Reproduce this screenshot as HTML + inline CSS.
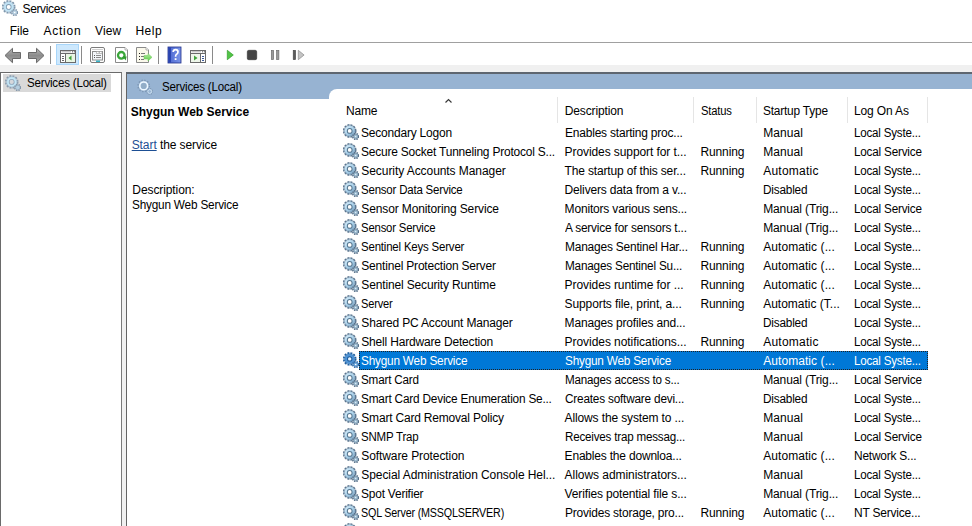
<!DOCTYPE html><html><head><meta charset="utf-8"><style>
*{margin:0;padding:0;box-sizing:border-box}
html,body{width:972px;height:526px;overflow:hidden;background:#fff}
body{position:relative;font-family:"Liberation Sans",sans-serif;font-size:12px;color:#000}
.t{position:absolute;white-space:nowrap;line-height:15px;height:15px;letter-spacing:-0.15px}
.b{letter-spacing:0}
.a{position:absolute}
.b{font-weight:bold}
.w{color:#fff}
svg.i{position:absolute;width:16px;height:16px}
</style></head><body>
<svg width="0" height="0" style="position:absolute"><defs><linearGradient id="gb" x1="0" y1="0" x2="1" y2="1"><stop offset="0" stop-color="#e0f4ff"/><stop offset="0.55" stop-color="#a8d0ea"/><stop offset="1" stop-color="#6f94b4"/></linearGradient>
<symbol id="gear" viewBox="0 0 16 16">
<circle cx="6.7" cy="6.9" r="6" fill="none" stroke="#5a748e" stroke-width="1.6" stroke-dasharray="2.2 0.94"/>
<circle cx="6.7" cy="6.9" r="5.3" fill="url(#gb)" stroke="#7090aa" stroke-width="0.5"/>
<circle cx="6.7" cy="6.9" r="2.9" fill="#56768f"/>
<circle cx="6.7" cy="6.9" r="1.9" fill="#fff"/>
<circle cx="12.7" cy="12.5" r="2.9" fill="none" stroke="#526c86" stroke-width="1.5" stroke-dasharray="1.4 0.96"/>
<circle cx="12.7" cy="12.5" r="2.3" fill="#98b8ce" stroke="#5e7890" stroke-width="0.5"/>
<circle cx="12.7" cy="12.5" r="0.7" fill="#e4f2fa"/>
</symbol>
<symbol id="gears" viewBox="0 0 16 16">
<circle cx="6.7" cy="6.9" r="5.9" fill="none" stroke="#1f5e9e" stroke-width="1.8" stroke-dasharray="2 1.09"/>
<circle cx="6.7" cy="6.9" r="5.1" fill="#4f94d6" stroke="#2a6aaa" stroke-width="0.5"/>
<circle cx="6.7" cy="6.9" r="2.7" fill="#1d5c9c"/>
<circle cx="6.7" cy="6.9" r="1.7" fill="#e8f4ff"/>
<circle cx="12.7" cy="12.5" r="2.9" fill="none" stroke="#2a66a4" stroke-width="1.5" stroke-dasharray="1.4 0.96"/>
<circle cx="12.7" cy="12.5" r="2.3" fill="#6aa6dc" stroke="#2a66a4" stroke-width="0.5"/>
<circle cx="12.7" cy="12.5" r="0.8" fill="#fff"/>
</symbol>
<symbol id="gearl" viewBox="0 0 16 16">
<circle cx="6.7" cy="6.9" r="5.9" fill="none" stroke="#8a9db0" stroke-width="1.8" stroke-dasharray="2 1.09"/>
<circle cx="6.7" cy="6.9" r="5.1" fill="#c4e6f6" stroke="#9ab4c8" stroke-width="0.5"/>
<circle cx="6.7" cy="6.9" r="2.9" fill="#90a8bc"/>
<circle cx="6.7" cy="6.9" r="2.1" fill="#d6d8dc"/>
<circle cx="12.7" cy="12.5" r="2.9" fill="none" stroke="#7f94a8" stroke-width="1.5" stroke-dasharray="1.4 0.96"/>
<circle cx="12.7" cy="12.5" r="2.3" fill="#b4cee0" stroke="#8aa0b4" stroke-width="0.5"/>
</symbol>
<symbol id="gearh" viewBox="0 0 16 16">
<circle cx="6.7" cy="6.9" r="5.7" fill="none" stroke="#6a829c" stroke-opacity="0.6" stroke-width="1.4" stroke-dasharray="1.4 1.58"/>
<circle cx="6.7" cy="6.9" r="3.9" fill="none" stroke="#eef8ff" stroke-width="1.6"/>
<circle cx="6.7" cy="6.9" r="2.6" fill="#8ea8bc" fill-opacity="0.5"/>
<circle cx="12.7" cy="12.5" r="2.8" fill="none" stroke="#6a829c" stroke-opacity="0.6" stroke-width="1.2" stroke-dasharray="1.1 1.1"/>
<circle cx="12.7" cy="12.5" r="1.9" fill="none" stroke="#d4e8f6" stroke-width="0.9"/>
</symbol>
<symbol id="geart" viewBox="0 0 16 16">
<circle cx="6.7" cy="6.9" r="5.9" fill="none" stroke="#7d96ac" stroke-width="1.8" stroke-dasharray="2 1.09"/>
<circle cx="6.7" cy="6.9" r="5.1" fill="#c2e4f6" stroke="#94b0c6" stroke-width="0.5"/>
<circle cx="6.7" cy="6.9" r="2.8" fill="#7f9ab0"/>
<circle cx="6.7" cy="6.9" r="2" fill="#fff"/>
<circle cx="12.7" cy="12.5" r="2.9" fill="none" stroke="#7d94aa" stroke-width="1.5" stroke-dasharray="1.4 0.96"/>
<circle cx="12.7" cy="12.5" r="2.3" fill="#b8d2e4" stroke="#8aa0b4" stroke-width="0.5"/>
<circle cx="12.7" cy="12.5" r="0.8" fill="#fff"/>
</symbol></defs></svg>
<svg class="i" style="left:2px;top:0px"><use href="#geart"/></svg>
<div class="t " style="left:22.50px;top:2.40px;letter-spacing:-0.35px">Services</div>
<div class="t " style="left:9.70px;top:24.10px;letter-spacing:0px">File</div>
<div class="t " style="left:43.50px;top:24.10px;letter-spacing:0.75px">Action</div>
<div class="t " style="left:95.00px;top:24.10px;letter-spacing:0.1px">View</div>
<div class="t " style="left:135.40px;top:24.10px;letter-spacing:0.5px">Help</div>
<div class="a" style="left:0;top:42px;width:972px;height:1px;background:#a0a0a0"></div>
<div class="a" style="left:0;top:65px;width:972px;height:461px;background:#f0f0f0"></div>
<div class="a" style="left:50px;top:46px;width:1px;height:18px;background:#8a8a8a"></div>
<div class="a" style="left:81px;top:46px;width:1px;height:18px;background:#8a8a8a"></div>
<div class="a" style="left:158px;top:46px;width:1px;height:18px;background:#8a8a8a"></div>
<div class="a" style="left:212px;top:46px;width:1px;height:18px;background:#8a8a8a"></div>
<div class="a" style="left:56px;top:44px;width:23px;height:21px;background:#cde8fd;border:1px solid #a8d6fa"></div>
<svg class="a" style="left:0;top:0" width="320" height="70" viewBox="0 0 320 70">
<defs>
<linearGradient id="arr" x1="0" y1="0" x2="0" y2="1"><stop offset="0" stop-color="#b8b8b8"/><stop offset="0.5" stop-color="#8c8c8c"/><stop offset="1" stop-color="#a8a8a8"/></linearGradient>
<linearGradient id="hb" x1="0" y1="0" x2="1" y2="0"><stop offset="0" stop-color="#4a66d0"/><stop offset="1" stop-color="#7a94e8"/></linearGradient>
<linearGradient id="grn" x1="0" y1="0" x2="0" y2="1"><stop offset="0" stop-color="#b4f0a0"/><stop offset="1" stop-color="#5cc84a"/></linearGradient>
</defs>
<!-- back arrow -->
<polygon points="5,55.5 12.5,48.3 12.5,52.5 20.5,52.5 20.5,58.5 12.5,58.5 12.5,62.7" fill="url(#arr)" stroke="#6a6a6a" stroke-width="1" stroke-linejoin="round"/>
<!-- forward arrow -->
<polygon points="44,55.5 36.5,48.3 36.5,52.5 28.5,52.5 28.5,58.5 36.5,58.5 36.5,62.7" fill="url(#arr)" stroke="#6a6a6a" stroke-width="1" stroke-linejoin="round"/>
<!-- console tree icon -->
<rect x="60.5" y="50.5" width="15" height="12" fill="#fff" stroke="#6a6a6a" stroke-width="1"/>
<line x1="61" y1="53.5" x2="75" y2="53.5" stroke="#6a6a6a"/>
<line x1="61.5" y1="51.8" x2="71" y2="51.8" stroke="#b0b0b0" stroke-width="1"/>
<rect x="72" y="51.2" width="1.2" height="1.2" fill="#6a6a6a"/><rect x="74" y="51.2" width="1.2" height="1.2" fill="#6a6a6a"/>
<line x1="65.5" y1="54" x2="65.5" y2="62" stroke="#6a6a6a"/>
<rect x="62" y="56" width="2" height="1" fill="#6a6a6a"/><rect x="62" y="58" width="2" height="1" fill="#6a6a6a"/><rect x="62" y="60" width="2" height="1" fill="#6a6a6a"/>
<rect x="66" y="54" width="9" height="8" fill="#eaf6e4"/>
<polygon points="68.5,58 71.5,55.5 71.5,60.5" fill="#3fa33a"/>
<!-- properties icon -->
<rect x="90.5" y="47.5" width="14" height="15" rx="1.5" fill="#fff" stroke="#7c7c7c" stroke-width="1"/>
<line x1="92" y1="49.5" x2="103" y2="49.5" stroke="#d0d0d0"/>
<rect x="92.5" y="51.5" width="10" height="8.5" fill="#f2f5f8" stroke="#8c8c8c" stroke-width="1"/>
<rect x="96.5" y="51.5" width="2.5" height="2" fill="#fff" stroke="#9a9a9a" stroke-width="0.6"/>
<rect x="99.5" y="51.5" width="2.5" height="2" fill="#fff" stroke="#9a9a9a" stroke-width="0.6"/>
<rect x="94" y="55" width="1" height="1" fill="#555"/><rect x="96" y="55" width="5" height="1" fill="#8a8a8a"/>
<rect x="94" y="57" width="1" height="1" fill="#555"/><rect x="96" y="57" width="5" height="1" fill="#8a8a8a"/>
<rect x="96" y="60.5" width="4" height="1.5" fill="#38b4c8"/>
<!-- refresh icon -->
<path d="M115.5,47.5 H125 L127.5,50 V62.5 H115.5 Z" fill="#fff" stroke="#8a8a8a" stroke-width="1"/>
<path d="M125,47.5 V50 H127.5" fill="#fff" stroke="#a0a0a0" stroke-width="0.8"/>
<circle cx="121.3" cy="55.3" r="3.3" fill="none" stroke="#3aa63a" stroke-width="2.3"/>
<polygon points="122.6,56.2 126.6,56.6 125.6,60.4" fill="#2f9a2f"/>
<!-- export list icon -->
<path d="M136.5,47.5 H146 L148.5,50 V62.5 H136.5 Z" fill="#fbf9ec" stroke="#8a8a8a" stroke-width="1"/>
<path d="M146,47.5 V50 H148.5" fill="#fff" stroke="#a0a0a0" stroke-width="0.8"/>
<rect x="139" y="53" width="1" height="1" fill="#222"/><rect x="141" y="53" width="4" height="1" fill="#777"/>
<rect x="139" y="56" width="1" height="1" fill="#222"/><rect x="141" y="56" width="3" height="1" fill="#777"/>
<rect x="139" y="59" width="1" height="1" fill="#222"/><rect x="141" y="59" width="3" height="1" fill="#777"/>
<polygon points="144,55.5 148,55.5 148,53.5 152,57.3 148,61 148,59 144,59" fill="url(#grn)" stroke="#6cc85a" stroke-width="0.5"/>
<!-- help book -->
<rect x="168" y="47" width="13" height="16" fill="url(#hb)" stroke="#1e2e88" stroke-width="0.8"/>
<rect x="168.4" y="47.4" width="2.6" height="15.2" fill="#2a44b0"/>
<path d="M173.2,52 Q173.2,49.6 175.6,49.6 Q178,49.6 178,52 Q178,53.6 176.3,54.4 Q175.6,54.9 175.6,56.8" fill="none" stroke="#fff" stroke-width="1.7"/><rect x="174.7" y="58.2" width="1.8" height="1.8" fill="#fff"/>
<!-- action pane icon -->
<rect x="190.5" y="50.5" width="15" height="12" fill="#fff" stroke="#6a6a6a" stroke-width="1"/>
<line x1="191" y1="53.5" x2="205" y2="53.5" stroke="#6a6a6a"/>
<line x1="191.5" y1="51.8" x2="201" y2="51.8" stroke="#b0b0b0" stroke-width="1"/>
<rect x="202" y="51.2" width="1.2" height="1.2" fill="#6a6a6a"/><rect x="204" y="51.2" width="1.2" height="1.2" fill="#6a6a6a"/>
<line x1="200.5" y1="54" x2="200.5" y2="62" stroke="#6a6a6a"/>
<rect x="191" y="54" width="9" height="8" fill="#eef6ea"/>
<polygon points="194,55.5 197.5,58 194,60.5" fill="#3fa33a"/>
<rect x="202" y="56" width="2" height="1" fill="#3c5a9a"/><rect x="202" y="58" width="2" height="1" fill="#3c5a9a"/><rect x="202" y="60" width="2" height="1" fill="#3c5a9a"/>
<!-- play -->
<polygon points="227.3,50.3 233.3,55 227.3,59.7" fill="#52c447" stroke="#2f9e27" stroke-width="0.7" stroke-linejoin="round"/>
<!-- stop -->
<rect x="247.3" y="50.3" width="9.4" height="9.4" rx="1.5" fill="#454545" stroke="#303030" stroke-width="0.6"/>
<!-- pause -->
<rect x="271.3" y="50.3" width="2.4" height="9.4" fill="#9a9a9a" stroke="#666" stroke-width="0.6"/>
<rect x="276.5" y="50.3" width="2.4" height="9.4" fill="#9a9a9a" stroke="#666" stroke-width="0.6"/>
<!-- restart -->
<rect x="293.2" y="50.3" width="2.4" height="9.4" fill="#5a5a5a" stroke="#444" stroke-width="0.6"/>
<polygon points="298.3,50.3 304.1,55 298.3,59.7" fill="#c4c4c4" stroke="#8a8a8a" stroke-width="0.7" stroke-linejoin="round"/>
</svg>
<div class="a" style="left:0;top:72px;width:122px;height:460px;border:1px solid #6a6a6a;border-right-color:#7a7a7a;background:#fff"></div>
<div class="a" style="left:3px;top:74px;width:108px;height:18px;background:#d9d9d9"></div>
<svg class="i" style="left:5px;top:75px"><use href="#gearl"/></svg>
<div class="t " style="left:26.60px;top:76.40px;letter-spacing:-0.200px;transform:scaleX(0.9623);transform-origin:0.00px 0;">Services (Local)</div>
<div class="a" style="left:126px;top:72px;width:850px;height:460px;border-left:1px solid #646464;border-top:2px solid #5e6670;background:#fff"></div>
<div class="a" style="left:127px;top:74px;width:845px;height:15px;background:#97b3d2"></div>
<div class="a" style="left:127px;top:89px;width:212px;height:10px;background:#97b3d2"></div>
<div class="a" style="left:329px;top:89px;width:643px;height:40px;background:#fff;border-top-left-radius:8px"></div>
<svg class="i" style="left:137px;top:79px"><use href="#gearh"/></svg>
<div class="t " style="left:162.40px;top:80.10px;letter-spacing:-0.200px;transform:scaleX(0.9635);transform-origin:0.00px 0;">Services (Local)</div>
<div class="t b" style="left:130.70px;top:105.40px;">Shygun Web Service</div>
<div class="t" style="left:131.7px;top:137.9px;letter-spacing:-0.08px"><span style="color:#1d4f94;text-decoration:underline">Start</span> the service</div>
<div class="t " style="left:132.30px;top:183.10px;letter-spacing:-0.087px;">Description:</div>
<div class="t " style="left:132.30px;top:198.10px;letter-spacing:-0.200px;transform:scaleX(0.9821);transform-origin:0.00px 0;">Shygun Web Service</div>
<div class="a" style="left:557px;top:97px;width:1px;height:26px;background:#e5e5e5"></div>
<div class="a" style="left:693px;top:97px;width:1px;height:26px;background:#e5e5e5"></div>
<div class="a" style="left:756px;top:97px;width:1px;height:26px;background:#e5e5e5"></div>
<div class="a" style="left:847px;top:97px;width:1px;height:26px;background:#e5e5e5"></div>
<div class="a" style="left:927px;top:97px;width:1px;height:26px;background:#e5e5e5"></div>
<div class="t " style="left:345.50px;top:104.40px;letter-spacing:-0.200px;transform:scaleX(0.9997);transform-origin:0.00px 0;">Name</div>
<div class="t " style="left:564.70px;top:104.40px;letter-spacing:-0.122px;">Description</div>
<div class="t " style="left:700.50px;top:104.40px;letter-spacing:-0.200px;transform:scaleX(0.9358);transform-origin:0.00px 0;">Status</div>
<div class="t " style="left:763.00px;top:104.40px;letter-spacing:-0.200px;transform:scaleX(0.9906);transform-origin:0.00px 0;">Startup Type</div>
<div class="t " style="left:854.00px;top:104.40px;letter-spacing:-0.143px;">Log On As</div>
<svg class="a" style="left:444px;top:98px;width:10px;height:6px" viewBox="0 0 10 6"><polyline points="1.5,4.5 4.5,1.5 7.5,4.5" fill="none" stroke="#383838" stroke-width="1.15"/></svg>
<svg class="i" style="left:343px;top:124px"><use href="#gear"/></svg>
<div class="t " style="left:361.30px;top:126.15px;letter-spacing:-0.200px;transform:scaleX(0.9981);transform-origin:0.00px 0;">Secondary Logon</div>
<div class="t " style="left:564.60px;top:126.15px;letter-spacing:-0.200px;transform:scaleX(0.9981);transform-origin:0.00px 0;">Enables starting proc...</div>
<div class="t " style="left:763.20px;top:126.15px;letter-spacing:0.088px;">Manual</div>
<div class="t " style="left:854.30px;top:126.15px;letter-spacing:-0.200px;transform:scaleX(0.9634);transform-origin:0.00px 0;">Local Syste...</div>
<svg class="i" style="left:343px;top:143px"><use href="#gear"/></svg>
<div class="t " style="left:361.30px;top:145.15px;letter-spacing:-0.200px;transform:scaleX(0.9958);transform-origin:0.00px 0;">Secure Socket Tunneling Protocol S...</div>
<div class="t " style="left:564.60px;top:145.15px;letter-spacing:-0.086px;">Provides support for t...</div>
<div class="t " style="left:700.40px;top:145.15px;letter-spacing:-0.100px;">Running</div>
<div class="t " style="left:763.20px;top:145.15px;letter-spacing:0.088px;">Manual</div>
<div class="t " style="left:854.30px;top:145.15px;letter-spacing:-0.200px;transform:scaleX(0.9750);transform-origin:0.00px 0;">Local Service</div>
<svg class="i" style="left:343px;top:162px"><use href="#gear"/></svg>
<div class="t " style="left:361.30px;top:164.15px;letter-spacing:-0.066px;">Security Accounts Manager</div>
<div class="t " style="left:564.60px;top:164.15px;letter-spacing:-0.160px;">The startup of this ser...</div>
<div class="t " style="left:700.40px;top:164.15px;letter-spacing:-0.100px;">Running</div>
<div class="t " style="left:763.20px;top:164.15px;letter-spacing:0.242px;">Automatic</div>
<div class="t " style="left:854.30px;top:164.15px;letter-spacing:-0.200px;transform:scaleX(0.9634);transform-origin:0.00px 0;">Local Syste...</div>
<svg class="i" style="left:343px;top:181px"><use href="#gear"/></svg>
<div class="t " style="left:361.30px;top:183.15px;letter-spacing:-0.200px;transform:scaleX(0.9554);transform-origin:0.00px 0;">Sensor Data Service</div>
<div class="t " style="left:564.60px;top:183.15px;letter-spacing:-0.159px;">Delivers data from a v...</div>
<div class="t " style="left:763.20px;top:183.15px;letter-spacing:-0.200px;transform:scaleX(0.9826);transform-origin:0.00px 0;">Disabled</div>
<div class="t " style="left:854.30px;top:183.15px;letter-spacing:-0.200px;transform:scaleX(0.9634);transform-origin:0.00px 0;">Local Syste...</div>
<svg class="i" style="left:343px;top:200px"><use href="#gear"/></svg>
<div class="t " style="left:361.30px;top:202.15px;letter-spacing:-0.126px;">Sensor Monitoring Service</div>
<div class="t " style="left:564.60px;top:202.15px;letter-spacing:-0.179px;">Monitors various sens...</div>
<div class="t " style="left:763.20px;top:202.15px;letter-spacing:-0.122px;">Manual (Trig...</div>
<div class="t " style="left:854.30px;top:202.15px;letter-spacing:-0.200px;transform:scaleX(0.9750);transform-origin:0.00px 0;">Local Service</div>
<svg class="i" style="left:343px;top:219px"><use href="#gear"/></svg>
<div class="t " style="left:361.30px;top:221.15px;letter-spacing:-0.200px;transform:scaleX(0.9458);transform-origin:0.00px 0;">Sensor Service</div>
<div class="t " style="left:564.60px;top:221.15px;letter-spacing:-0.200px;transform:scaleX(0.9915);transform-origin:0.00px 0;">A service for sensors t...</div>
<div class="t " style="left:763.20px;top:221.15px;letter-spacing:-0.122px;">Manual (Trig...</div>
<div class="t " style="left:854.30px;top:221.15px;letter-spacing:-0.200px;transform:scaleX(0.9634);transform-origin:0.00px 0;">Local Syste...</div>
<svg class="i" style="left:343px;top:238px"><use href="#gear"/></svg>
<div class="t " style="left:361.30px;top:240.15px;letter-spacing:-0.200px;transform:scaleX(0.9551);transform-origin:0.00px 0;">Sentinel Keys Server</div>
<div class="t " style="left:564.60px;top:240.15px;letter-spacing:-0.200px;transform:scaleX(0.9945);transform-origin:0.00px 0;">Manages Sentinel Har...</div>
<div class="t " style="left:700.40px;top:240.15px;letter-spacing:-0.100px;">Running</div>
<div class="t " style="left:763.20px;top:240.15px;letter-spacing:0.070px;">Automatic (...</div>
<div class="t " style="left:854.30px;top:240.15px;letter-spacing:-0.200px;transform:scaleX(0.9634);transform-origin:0.00px 0;">Local Syste...</div>
<svg class="i" style="left:343px;top:257px"><use href="#gear"/></svg>
<div class="t " style="left:361.30px;top:259.15px;letter-spacing:-0.192px;">Sentinel Protection Server</div>
<div class="t " style="left:564.60px;top:259.15px;letter-spacing:-0.200px;transform:scaleX(0.9785);transform-origin:0.00px 0;">Manages Sentinel Su...</div>
<div class="t " style="left:700.40px;top:259.15px;letter-spacing:-0.100px;">Running</div>
<div class="t " style="left:763.20px;top:259.15px;letter-spacing:0.070px;">Automatic (...</div>
<div class="t " style="left:854.30px;top:259.15px;letter-spacing:-0.200px;transform:scaleX(0.9634);transform-origin:0.00px 0;">Local Syste...</div>
<svg class="i" style="left:343px;top:276px"><use href="#gear"/></svg>
<div class="t " style="left:361.30px;top:278.15px;letter-spacing:-0.145px;">Sentinel Security Runtime</div>
<div class="t " style="left:564.60px;top:278.15px;letter-spacing:-0.079px;">Provides runtime for ...</div>
<div class="t " style="left:700.40px;top:278.15px;letter-spacing:-0.100px;">Running</div>
<div class="t " style="left:763.20px;top:278.15px;letter-spacing:0.070px;">Automatic (...</div>
<div class="t " style="left:854.30px;top:278.15px;letter-spacing:-0.200px;transform:scaleX(0.9634);transform-origin:0.00px 0;">Local Syste...</div>
<svg class="i" style="left:343px;top:295px"><use href="#gear"/></svg>
<div class="t " style="left:361.30px;top:297.15px;letter-spacing:-0.200px;transform:scaleX(0.9231);transform-origin:0.00px 0;">Server</div>
<div class="t " style="left:564.60px;top:297.15px;letter-spacing:-0.110px;">Supports file, print, a...</div>
<div class="t " style="left:700.40px;top:297.15px;letter-spacing:-0.100px;">Running</div>
<div class="t " style="left:763.20px;top:297.15px;letter-spacing:-0.006px;">Automatic (T...</div>
<div class="t " style="left:854.30px;top:297.15px;letter-spacing:-0.200px;transform:scaleX(0.9634);transform-origin:0.00px 0;">Local Syste...</div>
<svg class="i" style="left:343px;top:314px"><use href="#gear"/></svg>
<div class="t " style="left:361.30px;top:316.15px;letter-spacing:-0.164px;">Shared PC Account Manager</div>
<div class="t " style="left:564.60px;top:316.15px;letter-spacing:-0.170px;">Manages profiles and...</div>
<div class="t " style="left:763.20px;top:316.15px;letter-spacing:-0.200px;transform:scaleX(0.9826);transform-origin:0.00px 0;">Disabled</div>
<div class="t " style="left:854.30px;top:316.15px;letter-spacing:-0.200px;transform:scaleX(0.9634);transform-origin:0.00px 0;">Local Syste...</div>
<svg class="i" style="left:343px;top:333px"><use href="#gear"/></svg>
<div class="t " style="left:361.30px;top:335.15px;letter-spacing:-0.181px;">Shell Hardware Detection</div>
<div class="t " style="left:564.60px;top:335.15px;letter-spacing:-0.058px;">Provides notifications...</div>
<div class="t " style="left:700.40px;top:335.15px;letter-spacing:-0.100px;">Running</div>
<div class="t " style="left:763.20px;top:335.15px;letter-spacing:0.242px;">Automatic</div>
<div class="t " style="left:854.30px;top:335.15px;letter-spacing:-0.200px;transform:scaleX(0.9634);transform-origin:0.00px 0;">Local Syste...</div>
<div class="a" style="left:359px;top:351px;width:569px;height:19px;background:#0078d7;outline:1px dotted #222;outline-offset:-1px"></div>
<svg class="i" style="left:343px;top:352px"><use href="#gears"/></svg>
<div class="t w" style="left:361.30px;top:354.15px;letter-spacing:-0.200px;transform:scaleX(0.9821);transform-origin:0.00px 0;">Shygun Web Service</div>
<div class="t w" style="left:564.60px;top:354.15px;letter-spacing:-0.200px;transform:scaleX(0.9793);transform-origin:0.00px 0;">Shygun Web Service</div>
<div class="t w" style="left:763.20px;top:354.15px;letter-spacing:0.070px;">Automatic (...</div>
<div class="t w" style="left:854.30px;top:354.15px;letter-spacing:-0.200px;transform:scaleX(0.9634);transform-origin:0.00px 0;">Local Syste...</div>
<svg class="i" style="left:343px;top:371px"><use href="#gear"/></svg>
<div class="t " style="left:361.30px;top:373.15px;letter-spacing:-0.200px;transform:scaleX(0.9740);transform-origin:0.00px 0;">Smart Card</div>
<div class="t " style="left:564.60px;top:373.15px;letter-spacing:-0.200px;transform:scaleX(0.9685);transform-origin:0.00px 0;">Manages access to s...</div>
<div class="t " style="left:763.20px;top:373.15px;letter-spacing:-0.122px;">Manual (Trig...</div>
<div class="t " style="left:854.30px;top:373.15px;letter-spacing:-0.200px;transform:scaleX(0.9750);transform-origin:0.00px 0;">Local Service</div>
<svg class="i" style="left:343px;top:390px"><use href="#gear"/></svg>
<div class="t " style="left:361.30px;top:392.15px;letter-spacing:-0.200px;transform:scaleX(0.9843);transform-origin:0.00px 0;">Smart Card Device Enumeration Se...</div>
<div class="t " style="left:564.60px;top:392.15px;letter-spacing:-0.200px;transform:scaleX(0.9823);transform-origin:0.00px 0;">Creates software devi...</div>
<div class="t " style="left:763.20px;top:392.15px;letter-spacing:-0.200px;transform:scaleX(0.9826);transform-origin:0.00px 0;">Disabled</div>
<div class="t " style="left:854.30px;top:392.15px;letter-spacing:-0.200px;transform:scaleX(0.9634);transform-origin:0.00px 0;">Local Syste...</div>
<svg class="i" style="left:343px;top:409px"><use href="#gear"/></svg>
<div class="t " style="left:361.30px;top:411.15px;letter-spacing:-0.195px;">Smart Card Removal Policy</div>
<div class="t " style="left:564.60px;top:411.15px;letter-spacing:-0.131px;">Allows the system to ...</div>
<div class="t " style="left:763.20px;top:411.15px;letter-spacing:0.088px;">Manual</div>
<div class="t " style="left:854.30px;top:411.15px;letter-spacing:-0.200px;transform:scaleX(0.9634);transform-origin:0.00px 0;">Local Syste...</div>
<svg class="i" style="left:343px;top:428px"><use href="#gear"/></svg>
<div class="t " style="left:361.30px;top:430.15px;letter-spacing:-0.200px;transform:scaleX(0.9568);transform-origin:0.00px 0;">SNMP Trap</div>
<div class="t " style="left:564.60px;top:430.15px;letter-spacing:-0.200px;transform:scaleX(0.9669);transform-origin:0.00px 0;">Receives trap messag...</div>
<div class="t " style="left:763.20px;top:430.15px;letter-spacing:0.088px;">Manual</div>
<div class="t " style="left:854.30px;top:430.15px;letter-spacing:-0.200px;transform:scaleX(0.9750);transform-origin:0.00px 0;">Local Service</div>
<svg class="i" style="left:343px;top:447px"><use href="#gear"/></svg>
<div class="t " style="left:361.30px;top:449.15px;letter-spacing:-0.090px;">Software Protection</div>
<div class="t " style="left:564.60px;top:449.15px;letter-spacing:-0.196px;">Enables the downloa...</div>
<div class="t " style="left:763.20px;top:449.15px;letter-spacing:0.070px;">Automatic (...</div>
<div class="t " style="left:854.30px;top:449.15px;letter-spacing:-0.200px;transform:scaleX(0.9913);transform-origin:0.00px 0;">Network S...</div>
<svg class="i" style="left:343px;top:466px"><use href="#gear"/></svg>
<div class="t " style="left:361.30px;top:468.15px;letter-spacing:-0.074px;">Special Administration Console Hel...</div>
<div class="t " style="left:564.60px;top:468.15px;letter-spacing:-0.047px;">Allows administrators...</div>
<div class="t " style="left:763.20px;top:468.15px;letter-spacing:0.088px;">Manual</div>
<div class="t " style="left:854.30px;top:468.15px;letter-spacing:-0.200px;transform:scaleX(0.9634);transform-origin:0.00px 0;">Local Syste...</div>
<svg class="i" style="left:343px;top:485px"><use href="#gear"/></svg>
<div class="t " style="left:361.30px;top:487.15px;letter-spacing:-0.200px;transform:scaleX(0.9941);transform-origin:0.00px 0;">Spot Verifier</div>
<div class="t " style="left:564.60px;top:487.15px;letter-spacing:-0.140px;">Verifies potential file s...</div>
<div class="t " style="left:763.20px;top:487.15px;letter-spacing:-0.122px;">Manual (Trig...</div>
<div class="t " style="left:854.30px;top:487.15px;letter-spacing:-0.200px;transform:scaleX(0.9634);transform-origin:0.00px 0;">Local Syste...</div>
<svg class="i" style="left:343px;top:504px"><use href="#gear"/></svg>
<div class="t " style="left:361.30px;top:506.15px;letter-spacing:-0.200px;transform:scaleX(0.8944);transform-origin:0.00px 0;">SQL Server (MSSQLSERVER)</div>
<div class="t " style="left:564.60px;top:506.15px;letter-spacing:-0.200px;transform:scaleX(0.9970);transform-origin:0.00px 0;">Provides storage, pro...</div>
<div class="t " style="left:700.40px;top:506.15px;letter-spacing:-0.100px;">Running</div>
<div class="t " style="left:763.20px;top:506.15px;letter-spacing:0.070px;">Automatic (...</div>
<div class="t " style="left:854.30px;top:506.15px;letter-spacing:-0.200px;transform:scaleX(0.9981);transform-origin:0.00px 0;">NT Service...</div>
<svg class="i" style="left:343px;top:523px"><use href="#gear"/></svg>
</body></html>
